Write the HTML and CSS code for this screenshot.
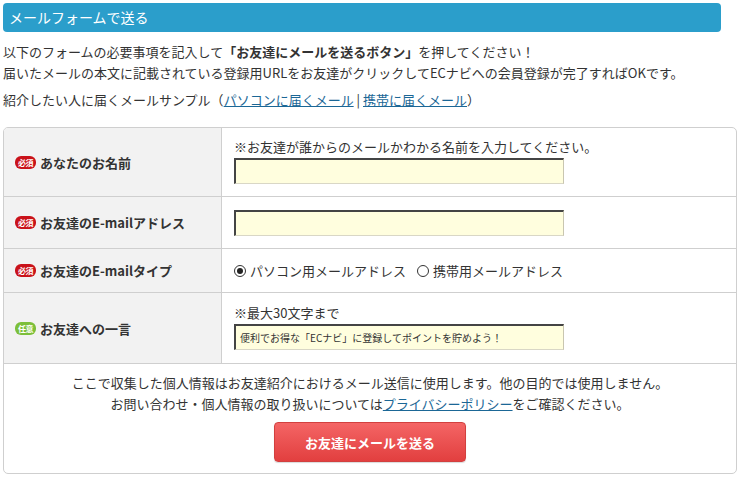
FILE: index.html
```html
<!DOCTYPE html>
<html lang="ja">
<head>
<meta charset="utf-8">
<title>メールフォームで送る</title>
<link rel="stylesheet" href="styles.css">
</head>
<body>
<div class="page">
  <h2 class="title">メールフォームで送る</h2>
  <div class="intro">
    <p class="lead">以下のフォームの必要事項を記入して<strong>「お友達にメールを送るボタン」</strong>を押してください！<br>届いたメールの本文に記載されている登録用URLをお友達がクリックしてECナビへの会員登録が完了すればOKです。</p>
    <p class="sample">紹介したい人に届くメールサンプル（<a href="#">パソコンに届くメール</a> | <a href="#">携帯に届くメール</a>）</p>
  </div>
  <div class="form">
    <div class="row r1">
      <div class="label"><span class="badge req">必須</span>あなたのお名前</div>
      <div class="field">
        <div class="hint">※お友達が誰からのメールかわかる名前を入力してください。</div>
        <div class="input"></div>
      </div>
    </div>
    <div class="row r2">
      <div class="label"><span class="badge req">必須</span>お友達のE-mailアドレス</div>
      <div class="field">
        <div class="input"></div>
      </div>
    </div>
    <div class="row r3">
      <div class="label"><span class="badge req">必須</span>お友達のE-mailタイプ</div>
      <div class="field radios">
        <label class="radio"><span class="dot on"></span>パソコン用メールアドレス</label>
        <label class="radio"><span class="dot"></span>携帯用メールアドレス</label>
      </div>
    </div>
    <div class="row r4">
      <div class="label"><span class="badge opt">任意</span>お友達への一言</div>
      <div class="field">
        <div class="hint">※最大30文字まで</div>
        <div class="input small">便利でお得な「ECナビ」に登録してポイントを貯めよう！</div>
      </div>
    </div>
    <div class="foot">
      <p class="note">ここで収集した個人情報はお友達紹介におけるメール送信に使用します。他の目的では使用しません。<br>お問い合わせ・個人情報の取り扱いについては<a href="#">プライバシーポリシー</a>をご確認ください。</p>
      <button class="send" type="button">お友達にメールを送る</button>
    </div>
  </div>
</div>
</body>
</html>
```
FILE: styles.css
```css
html, body {
  margin: 0;
  padding: 0;
  background: #fff;
}
body {
  font-family: "Noto Sans CJK JP", "Noto Sans", sans-serif;
  color: #333;
  font-size: 13px;
}
.page {
  padding: 3px;
}
.title {
  margin: 0;
  width: 712px;
  height: 29px;
  line-height: 29px;
  padding-left: 6px;
  background: #2b9ecb;
  border-radius: 4px;
  color: #fff;
  font-size: 14px;
  font-weight: normal;
}
.intro {
  padding-top: 9px;
}
.intro p {
  margin: 0;
  line-height: 21px;
}
.lead strong {
  font-weight: bold;
}
.sample {
  margin-top: 6px !important;
}
a {
  color: #1b6796;
  text-decoration: underline;
}
.form {
  margin-top: 17px;
  width: 732px;
  border: 1px solid #cfcfcf;
  border-radius: 5px;
  overflow: hidden;
}
.row {
  display: grid;
  grid-template-columns: 218px 1fr;
  border-bottom: 1px solid #cfcfcf;
}
.r1 { height: 68px; }
.r2 { height: 51px; }
.r3 { height: 43px; }
.r4 { height: 70px; }
.label {
  background: #f2f2f2;
  border-right: 1px solid #cfcfcf;
  display: flex;
  align-items: center;
  padding-left: 11px;
  font-weight: bold;
  font-size: 13px;
  color: #333;
}
.badge {
  display: inline-block;
  width: 21px;
  height: 13px;
  line-height: 13px;
  border-radius: 6px;
  color: #fff;
  font-size: 8px;
  font-weight: bold;
  text-align: center;
  margin-right: 4px;
  letter-spacing: -0.5px;
}
.badge.req { background: #c9121a; }
.badge.opt { background: #7cbf3a; }
.field {
  display: flex;
  flex-direction: column;
  justify-content: center;
  padding-left: 12px;
}
.hint {
  line-height: 18px;
  margin-top: -2px;
}
.input {
  margin-top: 2px;
  width: 327px;
  height: 23px;
  background: #fffede;
  border-top: 2px solid #444;
  border-left: 2px solid #444;
  border-right: 1px solid #c9c6b0;
  border-bottom: 1px solid #d9d7c6;
  box-sizing: content-box;
}
.r2 .input { margin-top: 0; }
.input.small {
  font-size: 10px;
  line-height: 23px;
  padding-left: 4px;
  width: 323px;
  color: #333;
}
.radios {
  flex-direction: row;
  justify-content: flex-start;
  align-items: center;
  gap: 11px;
}
.radio {
  display: flex;
  align-items: center;
}
.dot {
  width: 10px;
  height: 10px;
  border: 1px solid #333;
  border-radius: 50%;
  margin-right: 4px;
  position: relative;
  box-sizing: content-box;
}
.dot.on::after {
  content: "";
  position: absolute;
  left: 2px;
  top: 2px;
  width: 6px;
  height: 6px;
  border-radius: 50%;
  background: #222;
}
.foot {
  padding: 8px 0 11px;
  text-align: center;
}
.note {
  margin: 0;
  line-height: 21px;
}
.send {
  margin-top: 8px;
  width: 192px;
  height: 40px;
  border: 1px solid #d2403f;
  border-radius: 4px;
  background: linear-gradient(#f46565, #e23f3f);
  color: #fff;
  font-family: "Noto Sans CJK JP", sans-serif;
  font-size: 13px;
  font-weight: bold;
  box-shadow: 0 1px 1px rgba(0,0,0,0.15);
}
```
